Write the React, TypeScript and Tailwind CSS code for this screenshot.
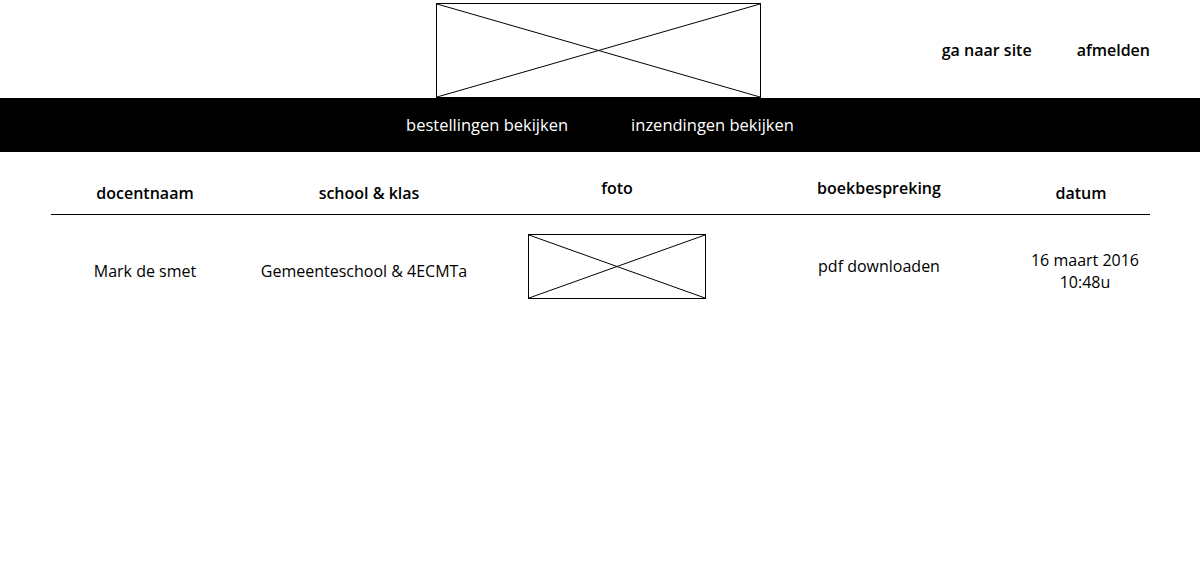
import React from 'react';

function Placeholder({ className }: { className: string }) {
  return (
    <div className={`relative border border-black bg-white ${className}`}>
      <svg className="absolute inset-0 h-full w-full" preserveAspectRatio="none" viewBox="0 0 100 100">
        <line x1="0" y1="0" x2="100" y2="100" stroke="black" strokeWidth="1" vectorEffect="non-scaling-stroke" />
        <line x1="100" y1="0" x2="0" y2="100" stroke="black" strokeWidth="1" vectorEffect="non-scaling-stroke" />
      </svg>
    </div>
  );
}

const cols = 'grid grid-cols-[188px_260px_236px_283px_132px]';

export default function App() {
  return (
    <div className="min-h-[578px] bg-white text-black font-['Open_Sans',sans-serif] text-[16px]">
      <header className="relative h-[98px]">
        <div className="flex justify-center pt-[3px]">
          <Placeholder className="ml-[-4px] h-[95px] w-[325px]" />
        </div>
        <div className="absolute right-[50px] top-[38px] flex gap-[45px] font-semibold">
          <a>ga naar site</a>
          <a>afmelden</a>
        </div>
      </header>

      <nav className="flex h-[54px] items-center justify-center gap-[63px] bg-black pt-[1px] text-[16.5px] text-white">
        <a>bestellingen bekijken</a>
        <a>inzendingen bekijken</a>
      </nav>

      <div className="mx-[51px] mt-[24px] w-[1099px]">
        <div className={`${cols} h-[39px] border-b border-black font-semibold text-center`}>
          <div className="pt-[5px]">docentnaam</div>
          <div className="pt-[5px]">school &amp; klas</div>
          <div>foto</div>
          <div className="pl-[5px]">boekbespreking</div>
          <div className="pt-[5px] pr-[6px]">datum</div>
        </div>
        <div className={`${cols} items-center pt-[19px] text-center`}>
          <div className="pt-[8px]">Mark de smet</div>
          <div className="pt-[8px] pr-[10px]">Gemeenteschool &amp; 4ECMTa</div>
          <div className="flex justify-center">
            <Placeholder className="h-[65px] w-[178px]" />
          </div>
          <div className="pl-[5px] pb-[2px]">pdf downloaden</div>
          <div className="pt-[9px] pl-[2px] leading-[22px]">
            16 maart 2016
            <br />
            10:48u
          </div>
        </div>
      </div>
    </div>
  );
}
